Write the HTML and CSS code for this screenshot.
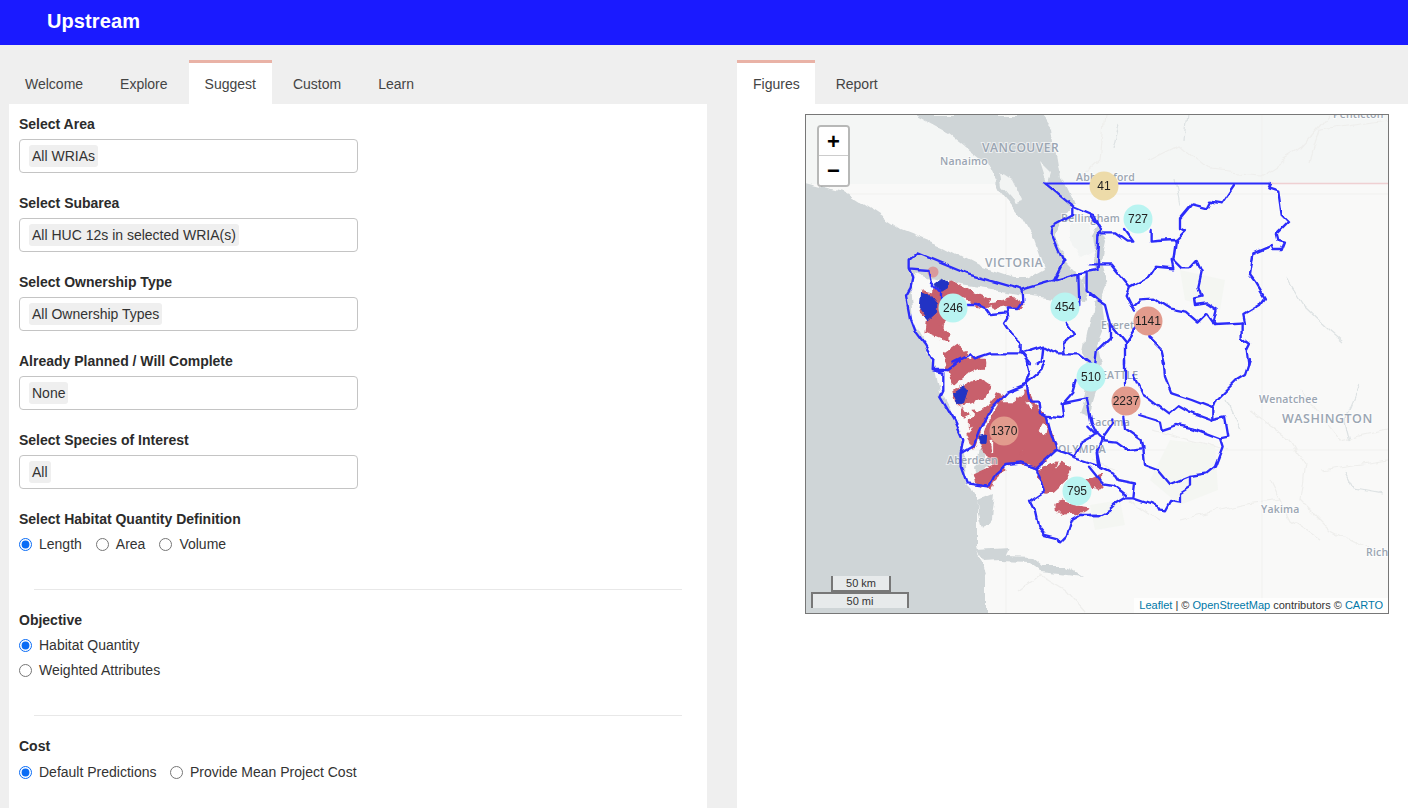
FILE: index.html
```
<!DOCTYPE html>
<html lang="en">
<head>
<meta charset="utf-8">
<title>Upstream</title>
<link rel="stylesheet" href="styles.css">
</head>
<body>
<header class="topbar"><span class="brand">Upstream</span></header>
<main class="layout">
  <section class="panel panel-left">
    <nav class="tabs">
      <a class="tab">Welcome</a><a class="tab">Explore</a><a class="tab active">Suggest</a><a class="tab">Custom</a><a class="tab">Learn</a>
    </nav>
    <form class="form">
      <div class="field"><div class="label">Select Area</div><div class="select"><span class="chip">All WRIAs</span></div></div>
      <div class="field"><div class="label">Select Subarea</div><div class="select"><span class="chip">All HUC 12s in selected WRIA(s)</span></div></div>
      <div class="field"><div class="label">Select Ownership Type</div><div class="select"><span class="chip">All Ownership Types</span></div></div>
      <div class="field"><div class="label">Already Planned / Will Complete</div><div class="select"><span class="chip">None</span></div></div>
      <div class="field"><div class="label">Select Species of Interest</div><div class="select"><span class="chip">All</span></div></div>
      <div class="radio-group">
        <div class="label">Select Habitat Quantity Definition</div>
        <div class="radios-inline">
          <label class="radio"><input type="radio" name="q" checked>Length</label>
          <label class="radio"><input type="radio" name="q">Area</label>
          <label class="radio"><input type="radio" name="q">Volume</label>
        </div>
      </div>
      <hr class="rule">
      <div class="radio-group">
        <div class="label">Objective</div>
        <label class="radio stacked"><input type="radio" name="o" checked>Habitat Quantity</label>
        <label class="radio stacked"><input type="radio" name="o">Weighted Attributes</label>
      </div>
      <hr class="rule">
      <div class="radio-group">
        <div class="label">Cost</div>
        <div class="radios-inline cost">
          <label class="radio"><input type="radio" name="c" checked>Default Predictions</label>
          <label class="radio"><input type="radio" name="c">Provide Mean Project Cost</label>
        </div>
      </div>
    </form>
  </section>
  <section class="panel panel-right">
    <nav class="tabs tabs-right">
      <a class="tab active">Figures</a><a class="tab">Report</a>
    </nav>
    <div class="map">
      <svg class="map-svg" viewBox="806 115 582 498" width="582" height="498">
        <defs>
          <filter id="wiggle" filterUnits="userSpaceOnUse" x="806" y="115" width="582" height="498" color-interpolation-filters="sRGB">
            <feTurbulence type="fractalNoise" baseFrequency="0.075" numOctaves="1" seed="4"/>
            <feDisplacementMap in="SourceGraphic" scale="7" xChannelSelector="R" yChannelSelector="G"/>
            <feGaussianBlur stdDeviation="0.35"/>
          </filter>
          <filter id="rough" filterUnits="userSpaceOnUse" x="806" y="115" width="582" height="498" color-interpolation-filters="sRGB">
            <feTurbulence type="fractalNoise" baseFrequency="0.15" numOctaves="2" seed="9"/>
            <feDisplacementMap in="SourceGraphic" scale="6" xChannelSelector="R" yChannelSelector="G"/>
            <feGaussianBlur stdDeviation="0.3"/>
          </filter>
          <filter id="soft" filterUnits="userSpaceOnUse" x="806" y="115" width="582" height="498" color-interpolation-filters="sRGB">
            <feTurbulence type="fractalNoise" baseFrequency="0.05" numOctaves="3" seed="2"/>
            <feDisplacementMap in="SourceGraphic" scale="10" xChannelSelector="R" yChannelSelector="G"/>
            <feGaussianBlur stdDeviation="0.4"/>
          </filter>
        </defs>
        <rect class="land" x="806" y="115" width="582" height="498"/>
        <rect class="land-north" x="806" y="115" width="582" height="69"/>
        <path class="seam" d="M806 194H1388M806 450H1388M1006 115V613M1262 115V613"/>
        <path class="forest" d="M1170 440L1215 445L1218 490L1180 505L1150 480ZM1090 505L1120 500L1125 525L1095 530ZM1180 270L1225 280L1220 310L1185 300Z"/>
        <g filter="url(#soft)">
          <path class="water" d="M800 182L843 193L873 212L900 230L943 247L983 268L1013 278L1027 278L1045 268L1035 240L1022 218L1000 190L988 165L950 135L913 115L1040 115L1052 130L1056 155L1060 178L1073 205L1060 222L1053 235L1067 262L1080 275L1087 292L1083 302L1060 300L1023 295L960 285L930 278L917 272L910 285L913 322L933 358L940 393L957 423L965 453L967 483L977 493L977 547L987 580L987 620L800 620Z"/>
          <path class="water" d="M1082 280L1095 268L1090 238L1098 225L1106 242L1102 262L1108 285L1102 300L1106 325L1098 345L1102 365L1092 395L1086 415L1079 412L1088 385L1084 350L1090 320L1094 300Z"/>
          <path class="water" d="M975 470L982 440L986 445L985 458L995 462L985 468L978 478ZM977 500L993 493L990 520L982 530L978 515ZM977 550L1010 548L1006 556L1032 557L1044 567L1066 567L1083 577L1060 574L1040 572L1028 562L1000 561L985 562Z"/>
          <path class="land-island" d="M1000 172L1012 180L1022 200L1016 202L1002 186ZM1072 225L1090 222L1094 250L1080 258L1070 240ZM1040 160L1052 172L1048 185Z"/>
        </g>
        <g filter="url(#soft)">
          <path class="river" d="M1286 278L1303 305L1330 331L1343 342M1175 180L1180 205M1118 125L1112 150M1188 115L1185 140M1345 470L1355 490L1382 495M1350 440L1345 420L1360 385M1226 400L1240 430"/>
          <path class="river thin" d="M1250 410L1290 440L1305 465L1300 500L1330 530L1370 550M1330 115L1300 150L1260 175L1210 170L1180 145L1150 160M1320 470L1388 460M1105 115L1100 160L1080 178M1230 450L1190 440L1150 430M1270 480L1290 520L1320 540M1180 520L1240 505L1280 500M1020 590L1040 575L1065 590L1085 613M1090 460L1120 470M1310 160L1320 130L1388 120M1300 390L1340 440L1388 430M1130 500L1160 520"/>
        </g>
        <g class="patch-red" filter="url(#rough)">
          <g transform="translate(800 105) scale(.3333)">
            <path d="M400 560L450 530L480 545L520 565L565 585L570 605L545 605L510 590L490 570L450 580L440 640L420 660L445 690L445 708L400 690L380 680L385 640L365 620L370 560L415 570L420 600Z"/>
            <path d="M575 595L640 582L670 600L660 612L620 600L580 608Z"/>
            <path d="M435 745L470 720L500 740L490 785L440 785Z"/>
            <path d="M500 785L520 755L555 770L555 785Z"/>
          </g>
          <g transform="translate(800 360) scale(.3333)">
            <path d="M436 0L555 0L555 15L500 40L462 72L450 45Z"/>
            <path d="M460 90L540 60L570 80L555 110L510 128L470 135Z"/>
            <path d="M488 142L502 165L490 172ZM525 155L545 165L525 175Z"/>
            <path d="M510 180L575 132L600 128L610 108L590 100L560 170L540 210L522 262L500 225L535 190L510 200Z"/>
            <path fill-rule="evenodd" d="M682 95L640 130L600 130L565 190L545 250L560 285L580 315L620 310L665 305L710 322L770 265L755 225L735 170L700 130ZM712 215L727 188L748 197L743 223L722 223ZM674 125L693 122L703 140L690 153ZM565 240L583 237L583 280L572 285ZM662 268L670 265L668 286L662 283Z"/>
            <path d="M522 345L600 310L610 330L580 360L572 382L530 372Z"/>
            <path d="M715 332L772 305L755 345L785 312L810 325L800 355L760 392L735 398L722 360Z"/>
            <path d="M770 430L790 425L830 440L865 445L850 456L790 460L770 450Z"/>
            <path d="M860 360L900 345L900 385L870 375Z"/>
          </g>
          <g transform="translate(1090 360) scale(.3333)">
            <path d="M0 355L25 350L37 382L0 375Z"/>
          </g>
        </g>
        <g class="patch-blue" filter="url(#wiggle)">
          <g transform="translate(800 105) scale(.3333)">
            <path d="M365 560L385 568L410 600L410 625L385 648L360 615Z"/>
            <path d="M405 535L425 520L445 535L445 550L425 562Z"/>
          </g>
          <g transform="translate(800 360) scale(.3333)">
            <path d="M458 100L490 78L503 90L490 130L470 130Z"/>
            <path d="M540 232L560 228L558 250L545 250Z"/>
          </g>
        </g>
        <circle class="dot" cx="933" cy="272" r="5.500"/>
        <text class="place" x="982" y="152">VANCOUVER</text>
        <text class="place small" x="940" y="165">Nanaimo</text>
        <text class="place" x="985" y="267">VICTORIA</text>
        <text class="place small" x="1076" y="181">Abbotsford</text>
        <text class="place small" x="1061" y="222">Bellingham</text>
        <text class="place small" x="1259" y="403">Wenatchee</text>
        <text class="place big" x="1282" y="423">WASHINGTON</text>
        <text class="place small" x="1261" y="513">Yakima</text>
        <text class="place small" x="1366" y="556">Richland</text>
        <text class="place small" x="1333" y="118">Penticton</text>
        <text class="place small" x="1101" y="329">Everett</text>
        <text class="place small" x="1095" y="379">SEATTLE</text>
        <text class="place small" x="1089" y="426">Tacoma</text>
        <text class="place small" x="947" y="464">Aberdeen</text>
        <text class="place small" x="1058" y="453">OLYMPIA</text>
        <path class="border-line" d="M1270 183.500H1388"/>
        <g class="wria" filter="url(#wiggle)">
          <g transform="translate(800 105) scale(.3333)">
            <path d="M735 235L820 305L820 330L755 365L752 380L790 470L760 530M890 495L835 505L665 555L510 510L352 445L326 470L326 490L385 495L392 530L420 560L420 590M326 490L340 520L335 545L318 575L330 640L345 680L375 720L400 765"/>
            <path d="M665 555L667 595L655 612L620 610L625 640L615 655L635 685L665 715L665 745L690 775M505 600L530 600L560 615L570 630L620 625M835 505L838 600M860 500L860 555L900 590M820 305L880 330L900 370M800 650L825 685L790 720L790 745L835 745L880 780M665 745L730 725L725 770M460 770L510 745L525 760L570 745L660 745M735 725L770 745L790 745M725 770L710 780"/>
          </g>
          <g transform="translate(1090 105) scale(.3333)">
            <path d="M540 240L535 250L565 260L575 330L595 350L560 385L565 405L585 410L575 435L550 435L545 422L490 445L480 510L495 530L525 580L510 600L460 630L465 655L375 660L370 655L380 615L350 595L315 600L312 580L335 575L325 545L335 500L320 468L300 490L275 490L250 465L258 405L200 408L182 410L182 375"/>
            <path d="M432 240L415 265L395 295L360 290L350 310L305 298L270 340L270 370L285 378L258 405M455 655L455 700L480 720L470 740L475 780M245 465L250 490L195 485L175 515L120 545L110 570L125 600L135 620M120 545L65 478L0 478M0 330L35 375L25 390L20 490M35 385L75 385L110 410L130 410L105 375M130 600L150 580L190 578L240 610L290 620L325 650L350 625L375 660M175 695L215 735L225 780M135 670L105 715L105 780M60 660L60 700L20 740L15 780M0 570L45 600L60 660L105 715"/>
          </g>
          <g transform="translate(1090 360) scale(.3333)">
            <path d="M105 0L105 70M220 0L225 50L245 100L305 120L370 145L380 120L440 60L465 45L480 0M130 45L155 100L235 160L265 135L300 155L370 180L405 172L415 230L390 235L398 260L375 320L350 340L300 348L240 372L205 330L165 315L160 265L155 240L105 205L100 170"/>
            <path d="M145 165L210 185L215 210L260 195L310 205L390 235M370 145L370 180M300 348L300 380L270 400L270 425L240 420L225 448L205 445L180 432L130 415L105 415L80 430L60 450L30 465L0 465M130 415L135 370L85 360L75 345L25 320L20 275L35 240L70 190L70 175M35 240L80 245L115 270L155 265M-5 200L35 240M108 405L70 375L40 370L0 320"/>
          </g>
          <g transform="translate(800 360) scale(.3333)">
            <path d="M400 0L398 30L430 38L430 90L420 110L465 185L490 240L482 280L482 320L500 370L570 380L590 340L620 315L665 310L710 325L770 270L755 225L740 170L720 160L715 125L690 125L680 70L620 95L575 145L540 215L525 255L482 280"/>
            <path d="M710 325L725 365L735 395L690 425L705 455L715 500L735 525L775 535L780 550L800 530L815 480L840 465L900 465M400 30L445 30L480 0M680 70L725 30L735 0M680 70L690 40L680 0M740 170L790 175L785 130L860 115L875 190L890 220L845 245L820 290L850 300L895 315M790 130L820 95L830 60M770 270L800 280L820 290M890 265L900 315"/>
          </g>
        </g>
        <path class="wria-top" d="M1045 183.500H1270"/>
        <g class="clusters">
          <circle class="c-wheat" cx="1104" cy="186" r="14.500"/><text class="count" x="1104" y="190">41</text>
          <circle class="c-cyan" cx="1138" cy="219" r="14.500"/><text class="count" x="1138" y="223">727</text>
          <circle class="c-cyan" cx="953" cy="308" r="14.500"/><text class="count" x="953" y="312">246</text>
          <circle class="c-cyan" cx="1065" cy="307" r="14.500"/><text class="count" x="1065" y="311">454</text>
          <circle class="c-salmon" cx="1148" cy="321" r="14.500"/><text class="count" x="1148" y="325">1141</text>
          <circle class="c-cyan" cx="1091" cy="377" r="14.500"/><text class="count" x="1091" y="381">510</text>
          <circle class="c-salmon" cx="1126" cy="401" r="14.500"/><text class="count" x="1126" y="405">2237</text>
          <circle class="c-salmon" cx="1004" cy="431" r="14.500"/><text class="count" x="1004" y="435">1370</text>
          <circle class="c-cyan" cx="1077" cy="491" r="14.500"/><text class="count" x="1077" y="495">795</text>
        </g>
      </svg>
      <div class="zoom">
        <a class="zoom-btn">+</a>
        <a class="zoom-btn">&#8722;</a>
      </div>
      <div class="scale">
        <div class="scale-km">50 km</div>
        <div class="scale-mi">50 mi</div>
      </div>
      <div class="attribution"><a>Leaflet</a> | © <a>OpenStreetMap</a> contributors © <a>CARTO</a></div>
    </div>
  </section>
</main>
</body>
</html>
```

FILE: styles.css
```
* { box-sizing: border-box; }
html, body { margin: 0; height: 100%; }
body {
  display: flex;
  flex-direction: column;
  height: 100vh;
  overflow: hidden;
  background: #efefef;
  font-family: "Liberation Sans", Arial, sans-serif;
  font-size: 14px;
  color: #333;
}
.topbar {
  flex: 0 0 45px;
  display: flex;
  align-items: center;
  padding: 0 0 3px 47px;
  background: #1a1aff;
}
.brand { color: #fff; font-size: 20px; font-weight: 700; letter-spacing: .1px; }
.layout {
  flex: 1;
  min-height: 0;
  display: flex;
  gap: 30px;
  padding: 15px 0 0 9px;
}
.panel { display: flex; flex-direction: column; background: #fff; }
.panel-left { flex: 0 0 698px; }
.panel-right { flex: 1; min-width: 0; }
.tabs { flex: 0 0 44px; display: flex; gap: 5px; background: #efefef; }
.tab {
  display: flex;
  align-items: center;
  padding: 3px 16px 0;
  color: #444;
  line-height: 20px;
}
.tab.active {
  padding-top: 0;
  border-top: 3px solid #e9b2a6;
  background: #fff;
  color: #444;
}
.tabs-right .tab { padding-right: 15.500px; padding-left: 15.500px; }
.tabs-right .tab.active { padding-left: 16px; }
.form { padding: 10px 10px 0; }
.field { margin-bottom: 20px; }
.label { height: 20px; line-height: 20px; font-weight: 700; color: #2b2b2b; }
.select {
  display: flex;
  align-items: center;
  width: 339px;
  height: 34px;
  margin-top: 5px;
  padding-left: 9px;
  border: 1px solid #c4c4c4;
  border-radius: 4px;
  background: #fff;
}
.chip {
  padding: 0 3px;
  height: 22px;
  line-height: 22px;
  border-radius: 3px;
  background: #efefef;
  color: #333;
}
.radios-inline { display: flex; gap: 14px; margin-top: 5px; }
.radios-inline.cost { gap: 13.500px; margin-top: 6px; }
.radio {
  display: flex;
  align-items: center;
  gap: 7px;
  height: 20px;
  line-height: 20px;
  color: #333;
}
.radio input {
  width: 13px;
  height: 13px;
  margin: 0;
  accent-color: #0a6cf5;
}
.stacked { margin-top: 5px; }
.rule { width: 648px; height: 1px; margin: 35px 0 20px 15px; border: 0; background: #e8e8e8; }
.map {
  position: relative;
  width: 584px;
  height: 500px;
  margin: 10px 0 0 68px;
  border: 1px solid #777;
  overflow: hidden;
}
.map-svg { display: block; }
.land { fill: #f9f9f8; }
.land-north { fill: #f4f6f5; }
.seam { fill: none; stroke: #f1f1ef; stroke-width: 1; }
.forest { fill: #f4f6f2; }
.water { fill: #cfd5d7; }
.land-island { fill: #f2f4f3; }
.river { fill: none; stroke: #dde2e3; stroke-width: 1.200; }
.river.thin { stroke: #eeeeec; }
.border-line { fill: none; stroke: #efd0d2; stroke-width: 1.500; }
.patch-red { fill: #c8606c; stroke: #c8606c; stroke-width: 7; stroke-linejoin: round; }
.patch-blue { fill: #2233c4; stroke: #2233c4; stroke-width: 3; stroke-linejoin: round; }
.dot { fill: #d99a9c; }
.place {
  font-family: "Open Sans", "Liberation Sans", sans-serif;
  font-size: 12px;
  font-weight: 600;
  letter-spacing: .5px;
  fill: #9aa5b2;
  stroke: #ffffff;
  stroke-width: 2px;
  stroke-opacity: .6;
  paint-order: stroke;
}
.place.small { font-size: 10.500px; letter-spacing: .2px; }
.place.big { font-size: 12.500px; }
.wria { fill: none; stroke: #2c2cfa; stroke-width: 7; stroke-linejoin: round; stroke-linecap: round; }
.wria-top { fill: none; stroke: #2c2cfa; stroke-width: 2; }
.c-cyan { fill: #b9f4f1; }
.c-wheat { fill: #eddba9; }
.c-salmon { fill: #e29b8d; }
.count {
  font-family: "Liberation Sans", Arial, sans-serif;
  font-size: 12px;
  fill: #222;
  text-anchor: middle;
}
.zoom {
  position: absolute;
  top: 10px;
  left: 11px;
  width: 33px;
  border: 2px solid rgba(0, 0, 0, .25);
  border-radius: 4px;
  background-clip: padding-box;
}
.zoom-btn {
  display: block;
  height: 29px;
  line-height: 29px;
  text-align: center;
  background: #fff;
  color: #000;
  font-family: "Liberation Sans", Arial, sans-serif;
  font-size: 22px;
  font-weight: 700;
}
.zoom-btn:first-child { border-bottom: 1px solid #ccc; border-radius: 2px 2px 0 0; }
.zoom-btn:last-child { border-radius: 0 0 2px 2px; }
.scale {
  position: absolute;
  left: 5px;
  bottom: 5px;
  font-size: 11px;
  line-height: 14px;
  color: #333;
}
.scale-km, .scale-mi {
  height: 16px;
  border: 2px solid #777;
  background: rgba(255, 255, 255, .5);
  text-align: center;
}
.scale-km { width: 60px; margin-left: 20px; border-top: 0; }
.scale-mi { width: 98px; border-bottom: 0; }
.attribution {
  position: absolute;
  right: 0;
  bottom: 0;
  height: 15px;
  padding: 0 5px;
  background: rgba(255, 255, 255, .75);
  font-size: 11px;
  line-height: 15px;
  color: #333;
}
.attribution a { color: #0078a8; }
```
